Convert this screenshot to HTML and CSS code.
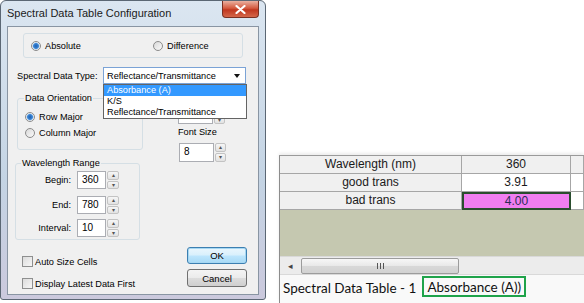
FILE: index.html
```html
<!DOCTYPE html>
<html lang="en">
<head>
    <meta charset="UTF-8">
    <title>Spectral Data Table Configuration</title>
    <link rel="stylesheet" href="styles.css">
</head>
<body>
    <div class="dialog">
        <div class="titlebar">
            <span class="title">Spectral Data Table Configuration</span>
            <div class="close">
                <svg width="11" height="9" viewBox="0 0 11 9"><path d="M1.5 1 L9.5 8 M9.5 1 L1.5 8" stroke="#fff" stroke-width="2.2" stroke-linecap="round"/></svg>
            </div>
        </div>
        <div class="client">
            <div class="mode">
                <label class="radio first"><span class="dot on"></span>Absolute</label>
                <label class="radio"><span class="dot"></span>Difference</label>
            </div>
            <div class="type-row">
                <span class="type-label">Spectral Data Type:</span>
                <div class="combo">Reflectance/Transmittance<span class="combo-arrow"></span></div>
            </div>
            <div class="middle">
                <div class="left-col">
                    <div class="group orient">
                        <span class="legend">Data Orientation</span>
                        <label class="radio row-major"><span class="dot on"></span>Row Major</label>
                        <label class="radio col-major"><span class="dot"></span>Column Major</label>
                    </div>
                    <div class="group wave">
                        <span class="legend">Wavelength Range</span>
                        <div class="field-row r1"><span class="field-label">Begin:</span><div class="input">360</div><div class="spin"><span>&#9652;</span><span>&#9662;</span></div></div>
                        <div class="field-row r2"><span class="field-label">End:</span><div class="input">780</div><div class="spin"><span>&#9652;</span><span>&#9662;</span></div></div>
                        <div class="field-row r3"><span class="field-label">Interval:</span><div class="input">10</div><div class="spin"><span>&#9652;</span><span>&#9662;</span></div></div>
                    </div>
                </div>
                <div class="right-col">
                    <div class="field-row hidden-spin"><div class="input wide"></div><div class="spin small"><span>&#9652;</span><span>&#9662;</span></div></div>
                    <span class="font-label">Font Size</span>
                    <div class="field-row font-row"><div class="input wide">8</div><div class="spin small"><span>&#9652;</span><span>&#9662;</span></div></div>
                </div>
            </div>
            <div class="bottom">
                <div class="checks">
                    <label class="check"><span class="box"></span>Auto Size Cells</label>
                    <label class="check"><span class="box"></span>Display Latest Data First</label>
                </div>
                <div class="buttons">
                    <button class="btn ok">OK</button>
                    <button class="btn cancel">Cancel</button>
                </div>
            </div>
            <ul class="droplist">
                <li class="selected">Absorbance (A)</li>
                <li>K/S</li>
                <li>Reflectance/Transmittance</li>
            </ul>
        </div>
    </div>

    <div class="sheet-area">
        <div class="sheet">
            <div class="grid">
                <div class="cell head">Wavelength (nm)</div>
                <div class="cell head">360</div>
                <div class="cell head"></div>
                <div class="cell head">good trans</div>
                <div class="cell">3.91</div>
                <div class="cell"></div>
                <div class="cell head">bad trans</div>
                <div class="cell pink">4.00</div>
                <div class="cell"></div>
            </div>
            <div class="empty"></div>
            <div class="hscroll">
                <div class="scroll-btn">&#9666;</div>
                <div class="thumb"><span class="grip"></span></div>
            </div>
            <div class="status">
                <span class="status-text">Spectral Data Table - 1</span>
                <span class="status-box">Absorbance (A))</span>
            </div>
        </div>
    </div>
</body>
</html>
```
FILE: styles.css
```css
* {
    box-sizing: border-box;
}
body {
    margin: 0;
    background: #fff;
    font-family: "Liberation Sans", Arial, sans-serif;
    display: flex;
    width: 584px;
    height: 303px;
    overflow: hidden;
}

/* dialog window */
.dialog {
    width: 266px;
    height: 300px;
    flex-shrink: 0;
    border: 1px solid #5b6774;
    border-radius: 6px 6px 3px 3px;
    background: linear-gradient(#dbe6f1, #c4d4e4 60%, #cbc9dd);
    padding: 0 6px 4px;
    display: flex;
    flex-direction: column;
}
.titlebar {
    height: 25px;
    display: flex;
    justify-content: space-between;
    align-items: flex-start;
}
.title {
    font-size: 11px;
    margin-top: 6px;
    color: #1a1a1a;
}
.close {
    width: 37px;
    height: 17px;
    border: 1px solid #7a3022;
    border-top: none;
    border-radius: 0 0 4px 4px;
    background: linear-gradient(#eab0a0, #d45a3f 45%, #c0371f 55%, #d4674a);
    display: flex;
    align-items: center;
    justify-content: center;
}
.client {
    height: 269px;
    border: 1px solid #8995a3;
    background: #f0f0f0;
    position: relative;
    display: flex;
    flex-direction: column;
    padding-top: 6px;
    font-size: 9.2px;
    color: #000;
}

/* radios and checks */
.radio {
    display: flex;
    align-items: center;
    gap: 4px;
    height: 12px;
}
.dot {
    width: 10px;
    height: 10px;
    border-radius: 50%;
    border: 1px solid #8b8b8b;
    background: linear-gradient(135deg, #d8d8d8, #fafafa);
}
.dot.on {
    background: radial-gradient(circle, #1f5fae 0, #3b86d6 2.5px, #a9cdf0 3.2px, #f2f2f2 3.8px);
}
.mode {
    margin-left: 15px;
    width: 220px;
    height: 25px;
    border: 1px solid #d5dfe5;
    border-radius: 3px;
    display: flex;
    align-items: center;
    padding-left: 7px;
}
.mode .first {
    width: 122px;
}
.type-row {
    display: flex;
    align-items: center;
    margin-top: 9px;
    height: 17px;
}
.type-label {
    margin-left: 9px;
    width: 86px;
}
.combo {
    width: 143px;
    height: 17px;
    border: 1px solid #7ba3d6;
    background: #fff;
    display: flex;
    align-items: center;
    justify-content: space-between;
    padding-left: 3px;
}
.combo-arrow {
    width: 0;
    height: 0;
    border-left: 3.5px solid transparent;
    border-right: 3.5px solid transparent;
    border-top: 4px solid #111;
    margin-right: 5px;
}
.droplist {
    position: absolute;
    left: 95px;
    top: 57px;
    width: 144px;
    margin: 0;
    padding: 0;
    list-style: none;
    border: 1px solid #646464;
    background: #fff;
}
.droplist li {
    height: 11px;
    line-height: 11px;
    padding-left: 3px;
}
.droplist .selected {
    background: #3399ff;
    color: #fff;
}

/* group boxes */
.middle {
    display: flex;
    margin-top: 14px;
}
.left-col {
    width: 135px;
    display: flex;
    flex-direction: column;
}
.group {
    border: 1px solid #d5dfe5;
    border-radius: 3px;
}
.legend {
    display: block;
    width: max-content;
    height: 12px;
    line-height: 12px;
    margin: -7px 0 0 -1px;
    padding: 0 1px;
    background: #f0f0f0;
}
.orient {
    margin-left: 9px;
    width: 126px;
    height: 52px;
    padding-left: 7px;
}
.row-major {
    margin-top: 7px;
}
.col-major {
    margin-top: 4px;
}
.wave {
    margin: 13px 0 0 7px;
    width: 125px;
    height: 77px;
    padding-left: 6px;
}
.field-row {
    display: flex;
    align-items: center;
    height: 18px;
}
.r1 {
    margin-top: 2px;
}
.r2 {
    margin-top: 7px;
}
.r3 {
    margin-top: 5px;
}
.field-label {
    width: 49px;
    text-align: right;
    margin-right: 6px;
}
.input {
    width: 29px;
    height: 100%;
    margin-right: 1px;
    border: 1px solid #abadb3;
    background: #fff;
    padding: 2px 0 0 4px;
    font-size: 10px;
}
.input.wide {
    width: 35px;
}
.spin {
    width: 12px;
    height: 100%;
    display: flex;
    flex-direction: column;
    gap: 1px;
}
.spin.small {
    width: 11px;
}
.spin span {
    flex: 1;
    border: 1px solid #c3c3c3;
    border-radius: 2px;
    background: linear-gradient(#f6f6f6, #e2e2e2);
    font-size: 6px;
    line-height: 6px;
    color: #555;
    text-align: center;
}
.right-col {
    margin-left: 35px;
    display: flex;
    flex-direction: column;
}
.hidden-spin {
    margin-top: 8px;
}
.font-label {
    margin-top: 3px;
    height: 11px;
    line-height: 11px;
}
.font-row {
    margin: 5px 0 0 1px;
    height: 19px;
}

/* bottom */
.bottom {
    display: flex;
    margin-top: 7px;
}
.checks {
    margin-left: 14px;
    padding-top: 9px;
    display: flex;
    flex-direction: column;
    gap: 11px;
}
.check {
    display: flex;
    align-items: center;
    gap: 2px;
    height: 11px;
}
.box {
    width: 11px;
    height: 11px;
    border: 1px solid #8e8f8f;
    background: linear-gradient(135deg, #dcdcdc, #f7f7f7);
}
.buttons {
    margin-left: auto;
    margin-right: 11px;
    display: flex;
    flex-direction: column;
    gap: 5px;
}
.btn {
    width: 60px;
    font-family: inherit;
    font-size: 9.5px;
    padding: 0;
    border: 1px solid #707070;
    border-radius: 3px;
    background: linear-gradient(#f4f4f4, #ebebeb 48%, #dcdcdc 52%, #cfcfcf);
    color: #000;
}
.ok {
    height: 17px;
    border-color: #3c7fb1;
    background: linear-gradient(#eaf6fd, #d9f0fc 48%, #bee6fd 52%, #a7d9f5);
    box-shadow: inset 0 0 0 1px #a6d7f2;
}
.cancel {
    height: 18px;
}

/* data table window */
.sheet-area {
    flex: 1;
    padding: 155px 0 0 13px;
    min-width: 0;
}
.sheet {
    height: 148px;
    border-left: 1px solid #8c8c8c;
    border-top: 1px solid #9a9a9a;
    box-shadow: 0 -2px 3px rgba(0, 0, 0, 0.08);
    display: flex;
    flex-direction: column;
    background: #fff;
}
.grid {
    display: grid;
    grid-template-columns: 182px 109px 1fr;
    grid-auto-rows: 18px;
    font-size: 12px;
}
.cell {
    border-right: 1px solid #a6a6a6;
    border-bottom: 1px solid #a6a6a6;
    text-align: center;
    line-height: 17px;
    background: #fff;
    color: #1a1a1a;
}
.cell.head {
    background: #f0f0f0;
}
.cell.pink {
    background: #f07ef0;
    border: 2px solid #2a4d2e;
    line-height: 14px;
    color: #2a2a55;
}
.empty {
    height: 46px;
    background: #c5c8b0;
}
.hscroll {
    height: 19px;
    display: flex;
    align-items: center;
    background: #ececec;
    border-top: 1px solid #d9d9d9;
    border-bottom: 1px solid #d9d9d9;
}
.scroll-btn {
    width: 21px;
    font-size: 9px;
    color: #444;
    text-align: center;
}
.thumb {
    width: 158px;
    height: 16px;
    border: 1px solid #9c9c9c;
    border-radius: 2px;
    background: linear-gradient(#f7f7f7, #e8e8e8 50%, #d8d8d8 51%, #d2d2d2);
    display: flex;
    align-items: center;
    justify-content: center;
}
.grip {
    width: 7px;
    height: 6px;
    background: repeating-linear-gradient(90deg, #555 0 1px, transparent 1px 3px);
}
.status {
    flex: 1;
    display: flex;
    align-items: flex-start;
    padding: 1px 0 0 3px;
    gap: 6px;
    background: #f9f9f9;
    font-family: Lato, "Liberation Sans", sans-serif;
    font-size: 13.5px;
    color: #111;
}
.status-text {
    margin-top: 4px;
}
.status-box {
    border: 2px solid #1fa34a;
    padding: 1px 3px 0;
    height: 21px;
}
```
